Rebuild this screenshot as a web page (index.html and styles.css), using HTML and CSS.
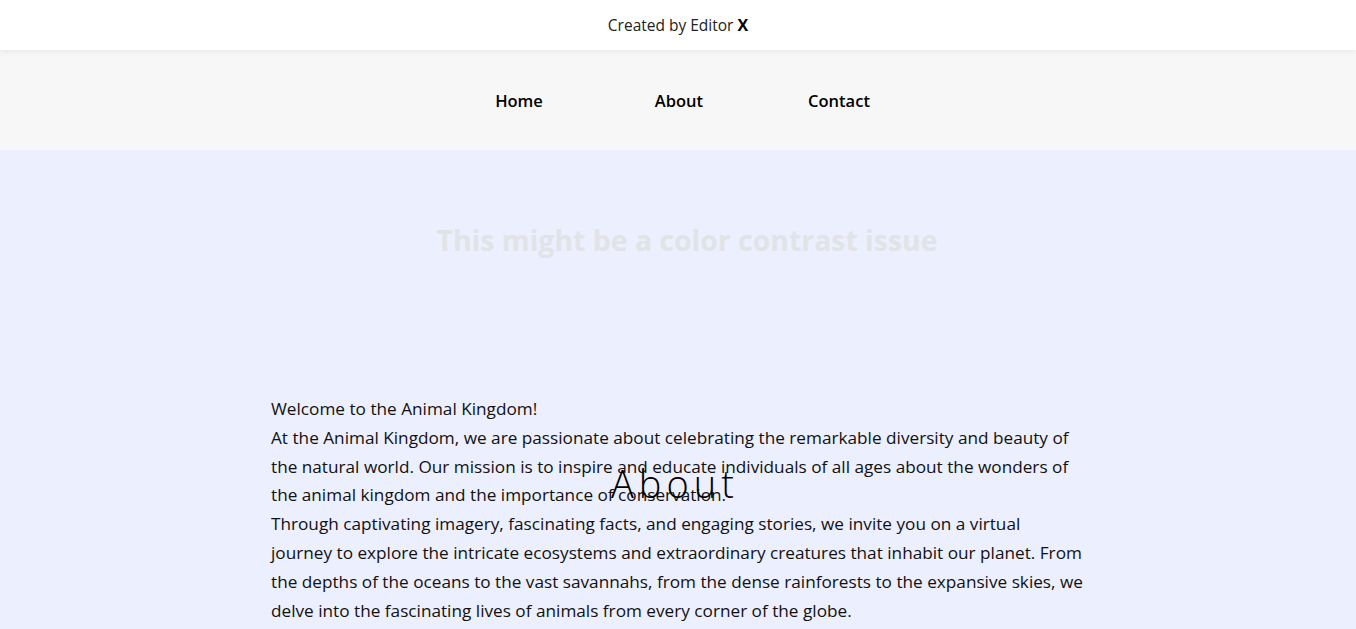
FILE: index.html
```html
<!DOCTYPE html>
<html lang="en">
<head>
<meta charset="utf-8">
<title>Animal Kingdom</title>
<link rel="stylesheet" href="styles.css">
</head>
<body>
<header class="topbar">
  <span class="credit">Created by Editor <b>X</b></span>
</header>
<nav class="nav">
  <a class="nav-link" href="#">Home</a>
  <a class="nav-link" href="#">About</a>
  <a class="nav-link" href="#">Contact</a>
</nav>
<main class="main">
  <h1 class="hero">This might be a color contrast issue</h1>
  <section class="about">
    <h2 class="about-title">About</h2>
    <p class="para">Welcome to the Animal Kingdom!</p>
    <p class="para">At the Animal Kingdom, we are passionate about celebrating the remarkable diversity and beauty of the natural world. Our mission is to inspire and educate individuals of all ages about the wonders of the animal kingdom and the importance of conservation.</p>
    <p class="para">Through captivating imagery, fascinating facts, and engaging stories, we invite you on a virtual journey to explore the intricate ecosystems and extraordinary creatures that inhabit our planet. From the depths of the oceans to the vast savannahs, from the dense rainforests to the expansive skies, we delve into the fascinating lives of animals from every corner of the globe.</p>
  </section>
</main>
</body>
</html>
```
FILE: styles.css
```css
html, body { margin: 0; padding: 0; }
body {
  font-family: "Open Sans", "Liberation Sans", sans-serif;
  color: #111;
  background: #eceffd;
  overflow: hidden;
}
.topbar {
  height: 50px;
  background: #fff;
  display: flex;
  align-items: center;
  justify-content: center;
  box-shadow: 0 2px 6px rgba(0,0,0,0.06);
  position: relative;
  z-index: 1;
}
.credit { font-size: 15.5px; color: #222; }
.credit b { font-weight: 700; font-size: 16px; color: #000; }
.nav {
  height: 100px;
  background: #f7f7f7;
  display: grid;
  grid-template-columns: repeat(3, 160px);
  justify-content: center;
  align-items: center;
  padding-left: 2px;
}
.nav-link {
  text-align: center;
  font-size: 16.5px;
  font-weight: 600;
  color: #000;
  text-decoration: none;
}
.main {
  padding-top: 70px;
}
.hero {
  margin: 0;
  padding-left: 18px;
  text-align: center;
  font-size: 28.4px;
  font-weight: 700;
  color: #e2e3e6;
  line-height: 40px;
}
.about {
  position: relative;
  width: 812px;
  margin: 135px auto 0;
  padding-right: 2px;
}
.about-title {
  position: absolute;
  left: 340px;
  top: 69px;
  margin: 0;
  font-size: 38px;
  font-weight: 300;
  letter-spacing: 5px;
  color: #000;
  line-height: 1;
}
.para {
  margin: 0;
  font-size: 17.2px;
  line-height: 28.8px;
}
```
